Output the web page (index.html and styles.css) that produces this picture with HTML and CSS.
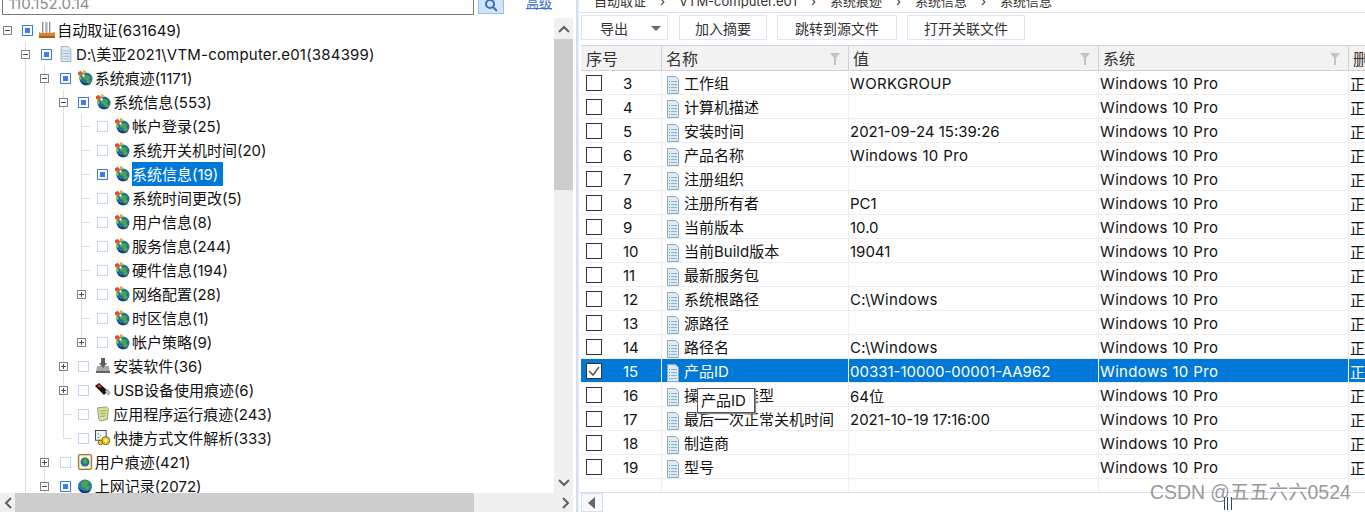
FILE: index.html
```html
<!doctype html>
<html lang="zh-CN">
    <head>
        <meta charset="utf-8">
        <meta name="viewport" content="width=device-width, initial-scale=1.0">
        <title>自动取证</title>
        <link rel="stylesheet" href="styles.css">
    </head>
    <body>
        <svg class="defs" aria-hidden="true">
            <symbol id="i-globe" viewBox="0 0 16 16">
                <circle cx="9" cy="9" r="6.500" fill="#1f6fa8"/>
                <path d="M6 7l4-2 3 2-1 3 2 1-2 3-2-1-1-3-3-1z" fill="#4fa83d"/>
                <path d="M3 10c1 4 4 5 7 5 2 0 3-1 4-2-3 1-8 1-11-3z" fill="#0e3f6b"/>
                <path d="M1 2l3-1 2 2-2 3-3-1z" fill="#e2562c"/>
                <path d="M6 0l3 1-1 3-2-1z" fill="#e8b02c"/>
                <path d="M2 6l3 1-1 3-2-1z" fill="#7cc043"/>
                <path d="M6 4l2 1-1 2-2-1z" fill="#fff"/>
            </symbol>
            <symbol id="i-doc" viewBox="0 0 14 18">
                <path d="M1.500.5h8l3 3v14h-11z" fill="#dbe9f5" stroke="#8ea9bf"/>
                <path d="M3 5h1v1H3zM3 8h1v1H3zM3 11h1v1H3zM3 14h1v1H3z" fill="#5ba55b"/>
                <path d="M5 5h6v1H5zM5 8h6v1H5zM5 11h6v1H5zM5 14h6v1H5z" fill="#8fb4d4"/>
            </symbol>
            <symbol id="i-root" viewBox="0 0 16 16">
                <path d="M3 0h2v11H3zM6.500 0h2v11h-2zM10 0h2v11h-2z" fill="#8a8f96"/>
                <path d="M4 0h1v11H4zM7.500 0h1v11h-1zM11 0h1v11h-1z" fill="#d5d8dc"/>
                <path d="M0 10l2 1h11l2-1 1 1v4H0z" fill="#d9822b"/>
                <path d="M0 14h16v2H0z" fill="#a85a16"/>
            </symbol>
            <symbol id="i-install" viewBox="0 0 16 16">
                <path d="M2 8h12l1 7H1z" fill="#a8a8a8"/>
                <path d="M1 13h14v2H1z" fill="#666"/>
                <path d="M6 0h4v5h2l-4 5-4-5h2z" fill="#5c5c5c"/>
            </symbol>
            <symbol id="i-usb" viewBox="0 0 16 16">
                <path d="M0 4l4-3 9 8-4 4z" fill="#111"/>
                <path d="M2 4l2-2 3 3-2 1z" fill="#d33"/>
                <path d="M10 9l3-2 3 4-2 2-1 1z" fill="#b8b8b8"/>
            </symbol>
            <symbol id="i-note" viewBox="0 0 16 18">
                <path d="M2 2l10-1 2 2-1 12-8 2-2-3z" fill="#d8dd9a" stroke="#8f9468"/>
                <path d="M5 6l6-1M5 9l6-1M5 12l5-1" stroke="#8f9f58"/>
            </symbol>
            <symbol id="i-link" viewBox="0 0 18 18">
                <rect x=".5" y=".5" width="12" height="11" fill="#f2f5f8" stroke="#334"/>
                <path d="M3 4h2v1H3zM6 6h1v1H6zM3 8h2v1H3z" fill="#3a8f4a"/>
                <circle cx="12" cy="12" r="4.500" fill="#f1cf1f" stroke="#6b5a00"/>
                <circle cx="12" cy="12" r="1.500" fill="#fff"/>
                <circle cx="6" cy="14" r="2.500" fill="#f1cf1f" stroke="#6b5a00"/>
            </symbol>
            <symbol id="i-user" viewBox="0 0 16 18">
                <rect x=".5" y=".5" width="15" height="17" rx="2" fill="#e9c77a" stroke="#7a6030"/>
                <rect x="2" y="2" width="12" height="14" fill="#fff4d0"/>
                <circle cx="8" cy="9" r="5" fill="#1f6fa8"/>
                <path d="M5 7l4-2 2 2-1 3-2 2-2-3z" fill="#4fa83d"/>
            </symbol>
            <symbol id="i-web" viewBox="0 0 16 16">
                <circle cx="8" cy="8.500" r="7" fill="#2a78b8"/>
                <path d="M4 5l4-3 4 2-2 3 3 2-3 4-2-3-3-1z" fill="#4ea63e"/>
                <path d="M1 9c1 4 4 6 7 6 3 0 5-2 6-3-4 2-10 1-13-3z" fill="#0d3d69"/>
            </symbol>
            <symbol id="i-filter" viewBox="0 0 10 12">
                <path d="M0 0h10L6 5v7H4V5z" fill="#c4c4c4"/>
            </symbol>
        </svg>

        <div class="app">
            <section class="left">
                <div class="search">
                    <div class="search-input">110.152.0.14</div>
                    <button class="search-btn" type="button">
                        <svg width="14" height="14" viewBox="0 0 14 14"><circle cx="6" cy="4" r="4" fill="none" stroke="#3c70b0" stroke-width="2"/><path d="M9 7l4 4" stroke="#3c70b0" stroke-width="2"/></svg>
                    </button>
                    <a class="search-more" href="#">高级</a>
                </div>
                <div class="tree-box">
                    <div class="tree">
                        <div class="node"><i class="col"><b class="minus"></b></i><i class="chk on"></i><svg class="ico"><use href="#i-root"/></svg><span class="lbl">自动取证(631649)</span></div>
                        <div class="node"><i class="col"></i><i class="col line"><b class="minus"></b></i><i class="chk on"></i><svg class="ico"><use href="#i-doc"/></svg><span class="lbl wide">D:\美亚2021\VTM-computer.e01(384399)</span></div>
                        <div class="node"><i class="col"></i><i class="col line"></i><i class="col line"><b class="minus"></b></i><i class="chk on"></i><svg class="ico"><use href="#i-globe"/></svg><span class="lbl">系统痕迹(1171)</span></div>
                        <div class="node"><i class="col"></i><i class="col line"></i><i class="col line"></i><i class="col line"><b class="minus"></b></i><i class="chk on"></i><svg class="ico"><use href="#i-globe"/></svg><span class="lbl">系统信息(553)</span></div>
                        <div class="node"><i class="col"></i><i class="col line"></i><i class="col line"></i><i class="col line"></i><i class="col line elbow"></i><i class="chk"></i><svg class="ico"><use href="#i-globe"/></svg><span class="lbl">帐户登录(25)</span></div>
                        <div class="node"><i class="col"></i><i class="col line"></i><i class="col line"></i><i class="col line"></i><i class="col line elbow"></i><i class="chk"></i><svg class="ico"><use href="#i-globe"/></svg><span class="lbl">系统开关机时间(20)</span></div>
                        <div class="node"><i class="col"></i><i class="col line"></i><i class="col line"></i><i class="col line"></i><i class="col line elbow"></i><i class="chk on"></i><svg class="ico"><use href="#i-globe"/></svg><span class="lbl sel">系统信息(19)</span></div>
                        <div class="node"><i class="col"></i><i class="col line"></i><i class="col line"></i><i class="col line"></i><i class="col line elbow"></i><i class="chk"></i><svg class="ico"><use href="#i-globe"/></svg><span class="lbl">系统时间更改(5)</span></div>
                        <div class="node"><i class="col"></i><i class="col line"></i><i class="col line"></i><i class="col line"></i><i class="col line elbow"></i><i class="chk"></i><svg class="ico"><use href="#i-globe"/></svg><span class="lbl">用户信息(8)</span></div>
                        <div class="node"><i class="col"></i><i class="col line"></i><i class="col line"></i><i class="col line"></i><i class="col line elbow"></i><i class="chk"></i><svg class="ico"><use href="#i-globe"/></svg><span class="lbl">服务信息(244)</span></div>
                        <div class="node"><i class="col"></i><i class="col line"></i><i class="col line"></i><i class="col line"></i><i class="col line elbow"></i><i class="chk"></i><svg class="ico"><use href="#i-globe"/></svg><span class="lbl">硬件信息(194)</span></div>
                        <div class="node"><i class="col"></i><i class="col line"></i><i class="col line"></i><i class="col line"></i><i class="col line"><b class="plus"></b></i><i class="chk"></i><svg class="ico"><use href="#i-globe"/></svg><span class="lbl">网络配置(28)</span></div>
                        <div class="node"><i class="col"></i><i class="col line"></i><i class="col line"></i><i class="col line"></i><i class="col line elbow"></i><i class="chk"></i><svg class="ico"><use href="#i-globe"/></svg><span class="lbl">时区信息(1)</span></div>
                        <div class="node"><i class="col"></i><i class="col line"></i><i class="col line"></i><i class="col line"></i><i class="col line end"><b class="plus"></b></i><i class="chk"></i><svg class="ico"><use href="#i-globe"/></svg><span class="lbl">帐户策略(9)</span></div>
                        <div class="node"><i class="col"></i><i class="col line"></i><i class="col line"></i><i class="col line"><b class="plus"></b></i><i class="chk"></i><svg class="ico"><use href="#i-install"/></svg><span class="lbl">安装软件(36)</span></div>
                        <div class="node"><i class="col"></i><i class="col line"></i><i class="col line"></i><i class="col line"><b class="plus"></b></i><i class="chk"></i><svg class="ico"><use href="#i-usb"/></svg><span class="lbl">USB设备使用痕迹(6)</span></div>
                        <div class="node"><i class="col"></i><i class="col line"></i><i class="col line"></i><i class="col line elbow"></i><i class="chk"></i><svg class="ico"><use href="#i-note"/></svg><span class="lbl">应用程序运行痕迹(243)</span></div>
                        <div class="node"><i class="col"></i><i class="col line"></i><i class="col line"></i><i class="col line elbow end"></i><i class="chk"></i><svg class="ico"><use href="#i-link"/></svg><span class="lbl">快捷方式文件解析(333)</span></div>
                        <div class="node"><i class="col"></i><i class="col line"></i><i class="col line"><b class="plus"></b></i><i class="chk"></i><svg class="ico"><use href="#i-user"/></svg><span class="lbl">用户痕迹(421)</span></div>
                        <div class="node"><i class="col"></i><i class="col line"></i><i class="col line"><b class="minus"></b></i><i class="chk on"></i><svg class="ico"><use href="#i-web"/></svg><span class="lbl">上网记录(2072)</span></div>
                    </div>
                    <div class="vbar">
                        <span class="arrow"><svg width="12" height="8" viewBox="0 0 12 8"><path d="M1 7l5-5 5 5" fill="none" stroke="#606060" stroke-width="2"/></svg></span>
                        <span class="vthumb"></span>
                        <span class="vrest"></span>
                        <span class="arrow"><svg width="12" height="8" viewBox="0 0 12 8"><path d="M1 1l5 5 5-5" fill="none" stroke="#606060" stroke-width="2"/></svg></span>
                    </div>
                </div>
                <div class="hbar">
                    <span class="harrow"><svg width="8" height="12" viewBox="0 0 8 12"><path d="M7 1L2 6l5 5" fill="none" stroke="#606060" stroke-width="2"/></svg></span>
                    <span class="hthumb"></span>
                    <span class="hrest"></span>
                    <span class="harrow"><svg width="8" height="12" viewBox="0 0 8 12"><path d="M1 1l5 5-5 5" fill="none" stroke="#606060" stroke-width="2"/></svg></span>
                </div>
            </section>

            <div class="split"></div>

            <section class="right">
                <div class="crumbs">
                    <span>自动取证</span><span>›</span><span>VTM-computer.e01</span><span>›</span><span>系统痕迹</span><span>›</span><span>系统信息</span><span>›</span><span>系统信息</span>
                </div>
                <div class="tools">
                    <button class="tool tool-drop" type="button">导出<i class="caret"></i></button>
                    <button class="tool tool-add" type="button">加入摘要</button>
                    <button class="tool tool-jump" type="button">跳转到源文件</button>
                    <button class="tool tool-open" type="button">打开关联文件</button>
                </div>
                <table class="grid">
                    <colgroup><col class="c-no"><col class="c-name"><col class="c-val"><col class="c-sys"><col class="c-del"></colgroup>
                    <thead>
                        <tr><th class="pad">序号</th><th>名称<svg class="flt"><use href="#i-filter"/></svg></th><th>值<svg class="flt"><use href="#i-filter"/></svg></th><th>系统<svg class="flt"><use href="#i-filter"/></svg></th><th>删除状态</th></tr>
                    </thead>
                    <tbody>
                        <tr><td><span class="box"></span><span class="no">3</span></td><td><svg class="doc"><use href="#i-doc"/></svg>工作组</td><td class="wide">WORKGROUP</td><td class="wide">Windows 10 Pro</td><td>正常</td></tr>
                        <tr><td><span class="box"></span><span class="no">4</span></td><td><svg class="doc"><use href="#i-doc"/></svg>计算机描述</td><td></td><td class="wide">Windows 10 Pro</td><td>正常</td></tr>
                        <tr><td><span class="box"></span><span class="no">5</span></td><td><svg class="doc"><use href="#i-doc"/></svg>安装时间</td><td>2021-09-24 15:39:26</td><td class="wide">Windows 10 Pro</td><td>正常</td></tr>
                        <tr><td><span class="box"></span><span class="no">6</span></td><td><svg class="doc"><use href="#i-doc"/></svg>产品名称</td><td class="wide">Windows 10 Pro</td><td class="wide">Windows 10 Pro</td><td>正常</td></tr>
                        <tr><td><span class="box"></span><span class="no">7</span></td><td><svg class="doc"><use href="#i-doc"/></svg>注册组织</td><td></td><td class="wide">Windows 10 Pro</td><td>正常</td></tr>
                        <tr><td><span class="box"></span><span class="no">8</span></td><td><svg class="doc"><use href="#i-doc"/></svg>注册所有者</td><td>PC1</td><td class="wide">Windows 10 Pro</td><td>正常</td></tr>
                        <tr><td><span class="box"></span><span class="no">9</span></td><td><svg class="doc"><use href="#i-doc"/></svg>当前版本</td><td>10.0</td><td class="wide">Windows 10 Pro</td><td>正常</td></tr>
                        <tr><td><span class="box"></span><span class="no">10</span></td><td><svg class="doc"><use href="#i-doc"/></svg>当前Build版本</td><td>19041</td><td class="wide">Windows 10 Pro</td><td>正常</td></tr>
                        <tr><td><span class="box"></span><span class="no">11</span></td><td><svg class="doc"><use href="#i-doc"/></svg>最新服务包</td><td></td><td class="wide">Windows 10 Pro</td><td>正常</td></tr>
                        <tr><td><span class="box"></span><span class="no">12</span></td><td><svg class="doc"><use href="#i-doc"/></svg>系统根路径</td><td class="wide">C:\Windows</td><td class="wide">Windows 10 Pro</td><td>正常</td></tr>
                        <tr><td><span class="box"></span><span class="no">13</span></td><td><svg class="doc"><use href="#i-doc"/></svg>源路径</td><td></td><td class="wide">Windows 10 Pro</td><td>正常</td></tr>
                        <tr><td><span class="box"></span><span class="no">14</span></td><td><svg class="doc"><use href="#i-doc"/></svg>路径名</td><td class="wide">C:\Windows</td><td class="wide">Windows 10 Pro</td><td>正常</td></tr>
                        <tr class="picked"><td><span class="box">
                            <svg width="14" height="14" viewBox="0 0 14 14"><path d="M2 7l4 4 6-8" fill="none" stroke="#555" stroke-width="1.500"/></svg></span><span class="no">15</span></td><td><svg class="doc"><use href="#i-doc"/></svg>产品ID</td><td>00331-10000-00001-AA962</td><td class="wide">Windows 10 Pro</td><td>正常</td></tr>
                        <tr><td><span class="box"></span><span class="no">16</span></td><td><svg class="doc"><use href="#i-doc"/></svg>操作系统类型</td><td>64位</td><td class="wide">Windows 10 Pro</td><td>正常</td></tr>
                        <tr><td><span class="box"></span><span class="no">17</span></td><td><svg class="doc"><use href="#i-doc"/></svg>最后一次正常关机时间</td><td>2021-10-19 17:16:00</td><td class="wide">Windows 10 Pro</td><td>正常</td></tr>
                        <tr><td><span class="box"></span><span class="no">18</span></td><td><svg class="doc"><use href="#i-doc"/></svg>制造商</td><td></td><td class="wide">Windows 10 Pro</td><td>正常</td></tr>
                        <tr><td><span class="box"></span><span class="no">19</span></td><td><svg class="doc"><use href="#i-doc"/></svg>型号</td><td></td><td class="wide">Windows 10 Pro</td><td>正常</td></tr>
                        <tr class="filler"><td></td><td></td><td></td><td></td><td></td></tr>
                    </tbody>
                </table>
                <div class="grid-scroll">
                    <span class="grid-left"><svg width="8" height="12" viewBox="0 0 8 12"><path d="M7 0v12L0 6z" fill="#666"/></svg></span>
                </div>
            </section>
        </div>

        <div class="tooltip">产品ID</div>
        <div class="mark">CSDN @五五六六0524</div>
        <div class="resize-cursor"></div>
    </body>
</html>
```
FILE: styles.css
```css
* {
    padding: 0;
    margin: 0;
    box-sizing: border-box;
    font-family: "Inter", "Noto Sans CJK SC", sans-serif;
}

html,
body {
    width: 1365px;
    height: 512px;
    overflow: hidden;
    background: #fff;
    color: #111;
    font-size: 15px;
}

.defs {
    display: none;
}

.app {
    display: flex;
    height: 512px;
}

/* left pane */
.left {
    width: 575px;
    display: flex;
    flex-direction: column;
    flex-shrink: 0;
}

.search {
    height: 18px;
    display: flex;
    align-items: flex-start;
    padding-left: 2px;
}

.search-input {
    width: 472px;
    height: 15px;
    border: 1px solid #7a7a7a;
    border-top: 0;
    padding-left: 6px;
    line-height: 7px;
    color: #8a8a8a;
    font-size: 15px;
}

.search-btn {
    width: 26px;
    height: 14px;
    margin-left: 4px;
    background: #cfe3fb;
    border: 1px solid #9ebde6;
    border-top: 0;
    display: flex;
    justify-content: center;
}

.search-more {
    margin-left: 22px;
    line-height: 6px;
    height: 9px;
    font-size: 13px;
    color: #3a6fd8;
    border-bottom: 1px solid #3a6fd8;
    text-decoration: none;
}

.tree-box {
    height: 475px;
    display: flex;
}

.tree {
    width: 554px;
    overflow: hidden;
}

.node {
    display: flex;
    align-items: center;
    height: 24px;
    margin-left: -2.33px;
    white-space: nowrap;
}

.col {
    display: block;
    position: relative;
    width: 18.67px;
    height: 24px;
    flex-shrink: 0;
}

.col.line::before {
    content: "";
    position: absolute;
    left: 9px;
    top: 0;
    bottom: 0;
    border-left: 1px solid #dedede;
}

.col.end::before {
    bottom: 12px;
}

.col.elbow::after {
    content: "";
    position: absolute;
    left: 9px;
    top: 12px;
    width: 9px;
    border-top: 1px solid #dedede;
}

.col b {
    position: absolute;
    left: 5px;
    top: 8px;
    width: 9px;
    height: 9px;
    background: #fff;
    border: 1px solid #808080;
}

.col .minus::before,
.col .plus::before {
    content: "";
    position: absolute;
    left: 1px;
    top: 3px;
    width: 5px;
    height: 1px;
    background: #404870;
}

.col .plus::after {
    content: "";
    position: absolute;
    left: 3px;
    top: 1px;
    width: 1px;
    height: 5px;
    background: #404870;
}

.chk {
    display: block;
    width: 11px;
    height: 11px;
    margin-left: 6px;
    flex-shrink: 0;
    border: 1px solid #c3d3f5;
    background: #fff;
}

.chk.on {
    border-color: #3d78f5;
    padding: 2px;
}

.chk.on::before {
    content: "";
    display: block;
    width: 5px;
    height: 5px;
    background: #3d78f5;
}

.ico {
    width: 16px;
    height: 16px;
    margin-left: 6px;
    flex-shrink: 0;
}

.lbl {
    margin-left: 2px;
    padding-top: 2px;
    line-height: 22px;
}

.lbl.wide {
    letter-spacing: .2px;
}

.lbl.sel {
    padding-right: 5px;
    background: #0078d7;
    color: #fff;
}

.vbar {
    width: 19px;
    background: #f0f0f0;
    display: flex;
    flex-direction: column;
}

.arrow {
    height: 21px;
    display: flex;
    align-items: center;
    justify-content: center;
}

.vthumb {
    height: 151px;
    background: #cdcdcd;
}

.vrest {
    flex: 1;
}

.hbar {
    height: 19px;
    background: #f0f0f0;
    display: flex;
    width: 573px;
}

.harrow {
    width: 15px;
    display: flex;
    align-items: center;
    justify-content: center;
}

.hthumb {
    width: 459px;
    background: #cdcdcd;
}

.hrest {
    flex: 1;
}

.split {
    width: 3px;
    flex-shrink: 0;
    margin-left: 1px;
    background: #d6dff2;
    border-right: 1px solid #e9eef8;
}

/* right pane */
.right {
    flex: 1;
    min-width: 0;
    overflow: hidden;
    display: flex;
    flex-direction: column;
    padding-left: 2px;
}

.crumbs {
    height: 13px;
    flex-shrink: 0;
    margin-left: -2px;
    padding-left: 15px;
    border-bottom: 1px solid #dbe4f3;
    display: flex;
    gap: 14px;
    line-height: 3px;
    font-size: 13px;
    color: #333;
    white-space: nowrap;
}

.tools {
    height: 32px;
    flex-shrink: 0;
    display: flex;
    padding-top: 2px;
}

.tool {
    height: 25px;
    background: #fff;
    border: 1px solid #dfe5f2;
    font-size: 14px;
    color: #333;
}

.tool-drop {
    width: 87px;
    text-align: left;
    padding-left: 18px;
    position: relative;
}

.caret {
    position: absolute;
    right: 6px;
    top: 10px;
    border: 5px solid transparent;
    border-top: 5px solid #666;
    border-bottom: 0;
}

.tool-add {
    width: 88px;
    margin-left: 11px;
}

.tool-jump {
    width: 120px;
    margin-left: 10px;
}

.tool-open {
    width: 118px;
    margin-left: 10px;
}

.grid {
    width: 868px;
    height: 447px;
    table-layout: fixed;
    border-collapse: separate;
    border-spacing: 0;
    flex-shrink: 0;
}

.c-no {
    width: 81px;
}

.c-name {
    width: 187px;
}

.c-val,
.c-sys {
    width: 250px;
}

.c-del {
    width: 100px;
}

th {
    height: 26px;
    position: relative;
    background: #f2f2f2;
    border-top: 1px solid #d0d0de;
    border-bottom: 1px solid #d0d0de;
    border-right: 1px solid #d0d0de;
    text-align: left;
    font-weight: 400;
    font-size: 16px;
    color: #333;
    padding-left: 4px;
    white-space: nowrap;
    overflow: hidden;
}

th.pad {
    padding-left: 5px;
}

.flt {
    position: absolute;
    right: 8px;
    top: 7px;
    width: 10px;
    height: 12px;
}

td {
    height: 24px;
    border-bottom: 1px solid #eee;
    border-right: 1px solid #eee;
    padding-left: 1px;
    padding-top: 1px;
    white-space: nowrap;
    overflow: hidden;
}

td.wide {
    letter-spacing: .35px;
}

td:first-child {
    padding-left: 5px;
    padding-top: 0;
}

td:nth-child(2) {
    padding-left: 4px;
}

.box {
    display: inline-block;
    width: 16px;
    height: 16px;
    border: 1px solid #333;
    background: #fff;
    vertical-align: middle;
}

.box svg {
    display: block;
    margin: 0;
}

.no {
    margin-left: 21px;
    vertical-align: middle;
}

.doc {
    width: 14px;
    height: 18px;
    margin-right: 4px;
    vertical-align: middle;
}

.picked td {
    background: #0078d7;
    color: #fff;
    border-right-color: #fff;
}

.filler td {
    height: 13px;
    border-bottom: 0;
}

.grid-scroll {
    height: 20px;
    flex-shrink: 0;
    margin-left: -2px;
    padding-left: 2px;
    border-top: 1px solid #d6dff2;
}

.grid-left {
    display: flex;
    align-items: center;
    justify-content: center;
    width: 22px;
    height: 19px;
    border: 1px solid #d6dff2;
    background: #f8f9fc;
}

/* things floating over the grid */
.tooltip {
    position: absolute;
    left: 697px;
    top: 388px;
    width: 58px;
    height: 25px;
    background: #fff;
    border: 1px solid #555;
    box-shadow: 1px 1px 1px #888;
    padding-left: 3px;
    line-height: 23px;
    font-size: 15px;
}

.mark {
    position: absolute;
    left: 1150px;
    top: 479px;
    font-family: "Liberation Sans", "Noto Sans CJK SC", sans-serif;
    font-size: 19.4px;
    line-height: 26px;
    color: #999;
    white-space: nowrap;
}

.resize-cursor {
    position: absolute;
    left: 1224px;
    top: 497px;
    width: 8px;
    height: 13px;
    border-left: 1px solid #2c4a8a;
    border-right: 1px solid #2c4a8a;
}

.resize-cursor::before {
    content: "";
    display: block;
    width: 1px;
    height: 13px;
    margin-left: 2px;
    background: #2c4a8a;
}
```
